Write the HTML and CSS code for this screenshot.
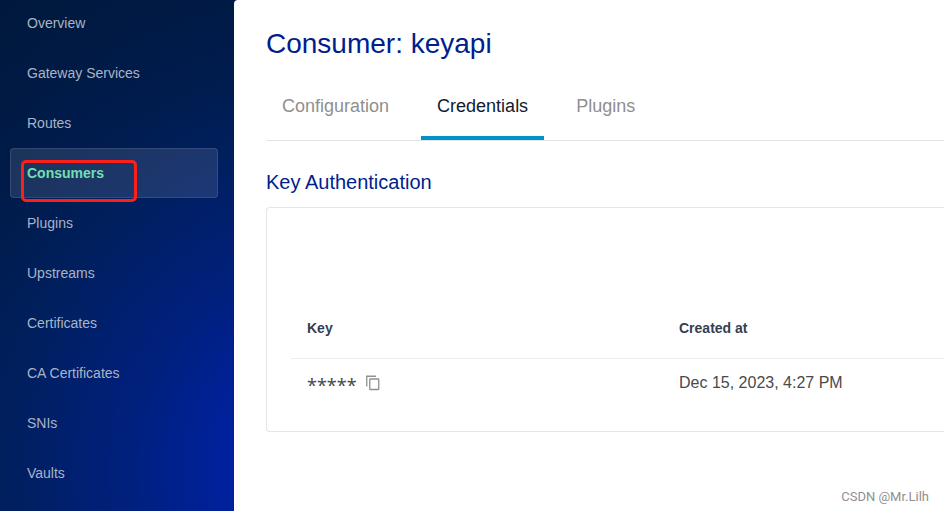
FILE: index.html
```html
<!DOCTYPE html>
<html lang="en">
<head>
  <meta charset="UTF-8">
  <title>Consumer: keyapi</title>
  <link rel="stylesheet" href="styles.css">
</head>
<body>
  <!-- Sidebar -->
  <nav class="sidebar">
    <a class="nav-link" href="#">Overview</a>
    <a class="nav-link" href="#">Gateway Services</a>
    <a class="nav-link" href="#">Routes</a>
    <a class="nav-link active" href="#">Consumers<span class="marker"></span></a>
    <a class="nav-link" href="#">Plugins</a>
    <a class="nav-link" href="#">Upstreams</a>
    <a class="nav-link" href="#">Certificates</a>
    <a class="nav-link" href="#">CA Certificates</a>
    <a class="nav-link" href="#">SNIs</a>
    <a class="nav-link" href="#">Vaults</a>
  </nav>

  <!-- Content -->
  <main class="content">
    <h1 class="page-title">Consumer: keyapi</h1>
    <div class="tabs">
      <a class="tab" href="#">Configuration</a>
      <a class="tab active" href="#">Credentials</a>
      <a class="tab" href="#">Plugins</a>
    </div>

    <h2 class="section-title">Key Authentication</h2>
    <div class="card">
      <table class="key-table">
        <thead>
          <tr>
            <th>Key</th>
            <th>Created at</th>
          </tr>
        </thead>
        <tbody>
          <tr>
            <td>
              <div class="key-cell">
                <span class="key-value">*****</span>
                <button class="copy-btn" type="button" aria-label="Copy">
                  <svg width="14" height="16" viewBox="0 0 14 16" fill="none" stroke="#8f8f8f">
                    <path d="M0.75 11.5V1.25H10" stroke-width="1.3"/>
                    <rect x="3.75" y="4" width="9" height="10.5" rx="0.5" stroke-width="1.3"/>
                  </svg>
                </button>
              </div>
            </td>
            <td>Dec 15, 2023, 4:27 PM</td>
          </tr>
        </tbody>
      </table>
    </div>
  </main>

  <div class="watermark">CSDN @Mr.Lilh</div>
</body>
</html>
```
FILE: styles.css
```css
* {
  box-sizing: border-box;
}
body {
  margin: 0;
  min-height: 100vh;
  display: flex;
  background: #001a48;
  font-family: "Liberation Sans", Arial, sans-serif;
  color: #4a4a4a;
  overflow: hidden;
}

/* Sidebar */
.sidebar {
  flex: 0 0 234px;
  padding: 0 16px 0 10px;
  background: radial-gradient(circle 590px at 340px 470px, #0022aa 0%, #0021a2 17%, #00207c 37%, #001f5c 58%, #001c4e 70%, #001a44 84%, #00183a 100%);
}
.nav-link {
  display: block;
  position: relative;
  height: 50px;
  padding: 0 16px;
  border: 1px solid transparent;
  border-radius: 4px;
  font-size: 14px;
  line-height: 48px;
  color: #a9b4c5;
  text-decoration: none;
}
.nav-link:first-child {
  margin-top: -2px;
}
.nav-link.active {
  background: rgba(255, 255, 255, 0.11);
  border-color: rgba(255, 255, 255, 0.11);
  font-weight: bold;
  color: #6fe0b0;
}
.marker {
  position: absolute;
  top: 11px;
  left: 10px;
  width: 116px;
  height: 42px;
  border: 3px solid #fb2019;
  border-radius: 5px;
  z-index: 1;
}

/* Content */
.content {
  flex: 1;
  min-width: 0;
  padding: 28px 0 0 32px;
  background: #fff;
  border-top-left-radius: 4px;
}
.page-title {
  margin: 0;
  font-size: 28px;
  font-weight: normal;
  line-height: 32px;
  color: #001e8c;
}
.tabs {
  display: flex;
  gap: 16px;
  margin-top: 24px;
  border-bottom: 1px solid #e1e4e8;
}
.tab {
  padding: 10px 16px 18px;
  border-bottom: 4px solid transparent;
  font-size: 18px;
  line-height: 24px;
  color: #8f8f8f;
  text-decoration: none;
}
.tab.active {
  border-color: #0094c6;
  color: #0f1b33;
}
.section-title {
  margin: 29px 0 13px;
  font-size: 20px;
  font-weight: normal;
  line-height: 24px;
  color: #001e8c;
}
.card {
  padding: 90px 0 24px 24px;
  border: 1px solid #e3e5e8;
  border-right: none;
  border-radius: 4px 0 0 4px;
}
.key-table {
  width: 100%;
  table-layout: fixed;
  border-collapse: collapse;
  text-align: left;
}
.key-table th {
  width: 372px;
  padding: 20px 16px;
  border-bottom: 1px solid #ebedf0;
  font-size: 14px;
  line-height: 20px;
  color: #333f51;
}
.key-table th:last-child {
  width: auto;
}
.key-table td {
  padding: 14px 16px;
  font-size: 16px;
  line-height: 20px;
}
.key-cell {
  display: flex;
  align-items: center;
  gap: 9px;
  height: 20px;
}
.key-value {
  padding-top: 4px;
  font-family: "Noto Sans", sans-serif;
  font-size: 18px;
}
.copy-btn {
  display: flex;
  padding: 0;
  border: none;
  background: none;
  cursor: pointer;
}

.watermark {
  position: absolute;
  right: 15px;
  bottom: 6px;
  font-family: Roboto, sans-serif;
  font-size: 13px;
  line-height: 16px;
  color: #8f8f8f;
}
```
